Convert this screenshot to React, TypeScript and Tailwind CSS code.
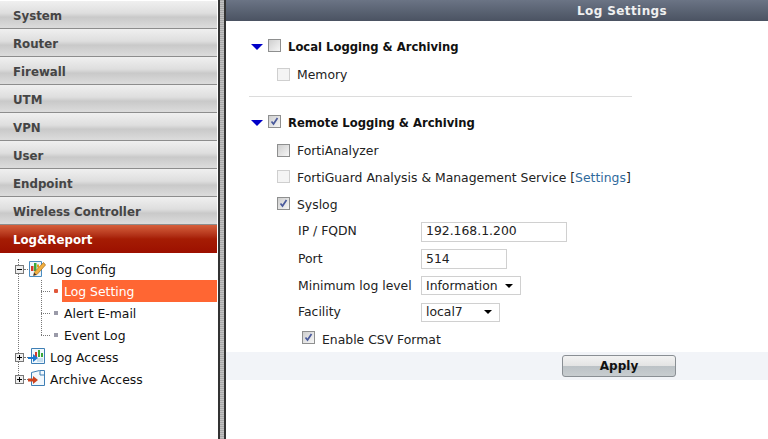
import React from "react";

function Check({ checked = false, disabled = false, up = "mb-[2px]" }: { checked?: boolean; disabled?: boolean; up?: string }) {
  return (
    <span className={`flex h-[13px] w-[13px] shrink-0 items-center justify-center border ${up} ${disabled ? "border-[#cfcfcf] bg-[#f4f4f4]" : "border-[#8e8f8f] bg-gradient-to-br from-[#cfcfcf] to-[#f6f6f6]"}`}>
      {checked && (
        <svg width="9" height="9" viewBox="0 0 9 9">
          <path d="M1.5 4.5 L3.5 7 L7.5 1" fill="none" stroke="#4a5a9c" strokeWidth="1.7" />
        </svg>
      )}
    </span>
  );
}

function Tri() {
  return (
    <svg width="12" height="6" viewBox="0 0 12 6" className="shrink-0">
      <path d="M0 0 H12 L6 6 Z" fill="#0000c8" />
    </svg>
  );
}

function Expander({ open = false }: { open?: boolean }) {
  return (
    <svg width="9" height="9" viewBox="0 0 9 9" className="shrink-0">
      <rect x="0.5" y="0.5" width="8" height="8" fill="#eee" stroke="#777" />
      <path d={open ? "M2 4.5H7" : "M2 4.5H7M4.5 2V7"} stroke="#000" />
    </svg>
  );
}

function ConfigIcon() {
  return (
    <svg width="18" height="18" viewBox="0 0 18 18" className="shrink-0">
      <path d="M1.5 1.5H13.5V16.5H1.5Z" fill="#eef5fb" stroke="#4a8cc0" />
      <rect x="3" y="6" width="2.5" height="5" fill="#d23a2a" />
      <rect x="6" y="3" width="2.5" height="8" fill="#3aa83a" />
      <rect x="9" y="4.5" width="2" height="3" fill="#e0a020" />
      <path d="M15.5 2.5 L6.5 12 L5.5 15.5 L9 14.5 L17.5 5 Z" fill="#f2b040" stroke="#a86a18" strokeWidth="0.7" />
      <path d="M5.5 15.5 L6.3 12.8 L8.3 14.7 Z" fill="#333" />
    </svg>
  );
}

function AccessIcon() {
  return (
    <svg width="18" height="18" viewBox="0 0 18 18" className="shrink-0">
      <path d="M3.5 0.5H16.5V15.5H3.5Z" fill="#f0f7fc" stroke="#3f7fb5" />
      <rect x="7" y="4" width="2" height="5" fill="#d23a2a" />
      <rect x="10" y="2" width="2" height="7" fill="#3aa83a" />
      <rect x="13" y="5" width="2" height="4" fill="#3aa83a" />
      <path d="M9 11H15M9 13H15" stroke="#9cc4e0" />
      <path d="M0 9H5V6L10 10L5 14V11H0Z" fill="#1c78d0" />
    </svg>
  );
}

function ArchiveIcon() {
  return (
    <svg width="18" height="18" viewBox="0 0 18 18" className="shrink-0">
      <path d="M3.5 2.5L11.5 0.5H16.5V15.5H3.5Z" fill="#f2f8fd" stroke="#3f7fb5" />
      <path d="M12 1V5H16" fill="none" stroke="#3f7fb5" />
      <path d="M0 8.5H5V6L10 10L5 14V11.5H0Z" fill="#cc4420" />
    </svg>
  );
}

function MenuItem({ label, active = false }: { label: string; active?: boolean }) {
  return (
    <div
      className={`flex h-[28px] items-center pl-[13px] text-[11.8px] font-bold ${
        active
          ? "bg-gradient-to-b from-[#d65f3c] via-[#a51c04] via-50% to-[#9c0f00] pt-[3px] text-white"
          : "border-b border-[#8d8d8d] bg-[linear-gradient(#f0f0f0_0%,#dedede_45%,#c9c9c9_60%,#dcdcdc_100%)] pt-[5px] text-[#454545]"
      }`}
    >
      {label}
    </div>
  );
}

function TreeRow({ children, className = "" }: { children: React.ReactNode; className?: string }) {
  return <div className={`flex h-[22px] items-center ${className}`}>{children}</div>;
}

function Leaf({ label, active = false }: { label: string; active?: boolean }) {
  return (
    <TreeRow className="pl-[41px]">
      <span className="w-[9px] shrink-0 border-t border-dotted border-[#777]" />
      <span className={`ml-[4px] h-[4px] w-[4px] shrink-0 ${active ? "rounded-[1px] bg-[#e0573a]" : "bg-[#9a9aa8]"}`} />
      <span className={`ml-[4px] flex h-[22px] flex-1 items-center pl-[2px] pt-[2px] ${active ? "bg-[#ff6633] text-white" : "text-[#111]"}`}>{label}</span>
    </TreeRow>
  );
}

function Branch({ open = false, icon, label }: { open?: boolean; icon: React.ReactNode; label: string }) {
  return (
    <TreeRow className="relative pl-[15px]">
      <Expander open={open} />
      <span className="w-[4px] border-t border-dotted border-[#777]" />
      {icon}
      <span className="ml-[4px] pt-[2px]">{label}</span>
    </TreeRow>
  );
}

function Sidebar() {
  const items = ["System", "Router", "Firewall", "UTM", "VPN", "User", "Endpoint", "Wireless Controller"];
  return (
    <aside className="w-[217px] shrink-0 bg-white pt-[1px]">
      {items.map((i) => (
        <MenuItem key={i} label={i} />
      ))}
      <MenuItem label="Log&Report" active />
      <div className="relative pt-[5px] text-[12.4px] text-[#111]">
        <span className="absolute left-[18px] top-[6px] h-[118px] border-l border-dotted border-[#777]" />
        <span className="absolute left-[41px] top-[27px] h-[55px] border-l border-dotted border-[#777]" />
        <Branch open icon={<ConfigIcon />} label="Log Config" />
        <Leaf label="Log Setting" active />
        <Leaf label="Alert E-mail" />
        <Leaf label="Event Log" />
        <Branch icon={<AccessIcon />} label="Log Access" />
        <Branch icon={<ArchiveIcon />} label="Archive Access" />
      </div>
    </aside>
  );
}

function Row({ h = 27, className = "", children }: { h?: number; className?: string; children: React.ReactNode }) {
  return (
    <div className={`flex items-center ${className}`} style={{ height: h }}>
      {children}
    </div>
  );
}

function Field({ label, children, h = 27, labelClass = "" }: { label: string; children: React.ReactNode; h?: number; labelClass?: string }) {
  return (
    <Row h={h} className="pl-[72px]">
      <span className={`w-[123px] shrink-0 ${labelClass}`}>{label}</span>
      {children}
    </Row>
  );
}

function Select({ value, w, textClass = "" }: { value: string; w: string; textClass?: string }) {
  return (
    <div className={`flex h-[19px] items-center justify-between border border-[#d0d0d0] pl-[4px] pr-[7px] ${w}`}>
      <span className={textClass}>{value}</span>
      <svg width="8" height="4" viewBox="0 0 8 4">
        <path d="M0 0H8L4 4Z" fill="#000" />
      </svg>
    </div>
  );
}

export default function App() {
  return (
    <div className="flex h-[439px] w-[768px] overflow-hidden bg-white text-[12.4px] font-['DejaVu_Sans',sans-serif] text-[#222]">
      <Sidebar />
      <div className="w-[1px] shrink-0 bg-white" />
      <div className="h-full w-[8px] shrink-0 border-x-2 border-[#333] bg-[repeating-linear-gradient(#a8a8a8_0px,#a8a8a8_1px,#c2c2c2_1px,#c2c2c2_2px)]" />
      <main className="flex min-w-0 flex-1 flex-col">
        <header className="flex h-[21px] items-center bg-gradient-to-b from-[#6b7485] to-[#4b5362] pl-[351px] text-[12px] font-bold tracking-[0.4px] text-[#f0f0f0]">
          Log Settings
        </header>
        <div className="h-[12px]" />
        <Row className="pl-[25px] text-[11.6px] font-bold text-[#111]" h={28}>
          <Tri />
          <span className="ml-[5px]"><Check up="mb-[3px]" /></span>
          <span className="ml-[7px] pt-[2px]">Local Logging &amp; Archiving</span>
        </Row>
        <Row h={28} className="pl-[51px]">
          <Check disabled />
          <span className="ml-[7px]">Memory</span>
        </Row>
        <div className="mt-[7px] ml-[23px] h-px w-[383px] bg-[#dcdcdc]" />
        <div className="h-[12px]" />
        <Row className="pl-[25px] text-[11.6px] font-bold text-[#111]" h={28}>
          <Tri />
          <span className="ml-[5px]"><Check checked up="mb-[3px]" /></span>
          <span className="ml-[7px] pt-[2px]">Remote Logging &amp; Archiving</span>
        </Row>
        <Row h={27} className="pl-[51px] pt-[1px]">
          <Check />
          <span className="ml-[7px]">FortiAnalyzer</span>
        </Row>
        <Row h={27} className="pl-[51px]">
          <Check disabled />
          <span className="ml-[7px] pt-[2px]">FortiGuard Analysis &amp; Management Service [<span className="text-[#2f6a9c]">Settings</span>]</span>
        </Row>
        <Row h={27} className="pl-[51px]">
          <Check checked />
          <span className="ml-[7px] pt-[2px]">Syslog</span>
        </Row>
        <Field label="IP / FQDN">
          <div className="flex h-[20px] w-[146px] items-center border border-[#d0d0d0] pl-[4px]">192.168.1.200</div>
        </Field>
        <Field label="Port" labelClass="pt-[2px]">
          <div className="flex h-[20px] w-[86px] items-center border border-[#d0d0d0] pl-[4px] pt-[2px]">514</div>
        </Field>
        <Field label="Minimum log level" labelClass="pt-[2px]">
          <Select value="Information" w="w-[100px]" textClass="pt-[2px]" />
        </Field>
        <Field label="Facility" h={26}>
          <Select value="local7" w="w-[79px]" />
        </Field>
        <Row h={27} className="pl-[76px]">
          <Check checked />
          <span className="ml-[7px] pt-[3px]">Enable CSV Format</span>
        </Row>
        <div className="flex h-[28px] items-center bg-[#f2f4f8] pl-[336px]">
          <button className="h-[22px] w-[114px] rounded-[3px] border border-[#8a8f94] bg-[linear-gradient(#f2f2f2_0%,#e4e4e4_48%,#bcc2c6_52%,#c8cdd0_100%)] text-[12px] font-bold text-[#111]">
            Apply
          </button>
        </div>
      </main>
    </div>
  );
}
